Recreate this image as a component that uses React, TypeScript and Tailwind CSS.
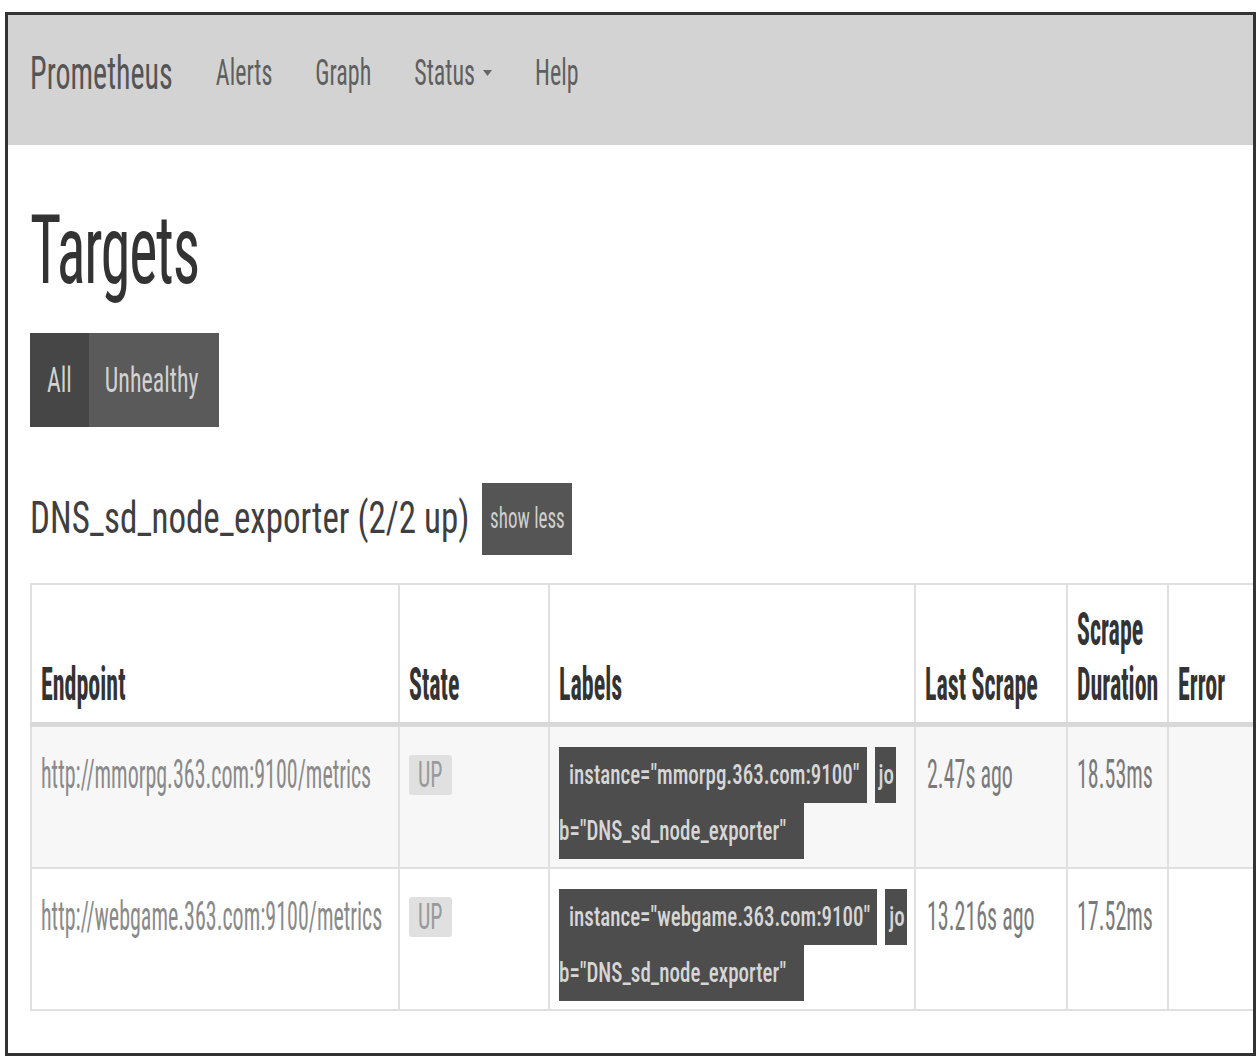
import type { ReactNode } from 'react';

const targets = [
  {
    endpoint: 'http://mmorpg.363.com:9100/metrics',
    instance: 'instance="mmorpg.363.com:9100"',
    lastScrape: '2.47s ago',
    duration: '18.53ms',
    striped: true,
  },
  {
    endpoint: 'http://webgame.363.com:9100/metrics',
    instance: 'instance="webgame.363.com:9100"',
    lastScrape: '13.216s ago',
    duration: '17.52ms',
    striped: false,
  },
];

// the screenshot is stretched vertically, so glyphs get a taller scale
function Tall({ className, children }: { className: string; children: ReactNode }) {
  return <span className={className}>{children}</span>;
}

function Caret() {
  return (
    <svg width="9" height="6" viewBox="0 0 9 6" className="ml-[8px] inline-block">
      <path d="M0 0 L9 0 L4.5 6 Z" fill="#666" />
    </svg>
  );
}

const th = 'align-bottom border-2 border-b-[5px] border-[#e0e0e0] border-b-[#d8d8d8] px-[9px] pt-[18px] pb-[9px]';
const td = 'align-top border-2 border-[#e0e0e0] px-[9px] pt-[20px] pb-[8px]';

export default function App() {
  return (
    <div className="min-h-screen bg-white pt-[12px] pl-[5px] pr-[2px] pb-[6px] [font-family:Roboto,'Liberation_Sans',sans-serif] [font-stretch:condensed]">
      <div className="h-[1044px] border-[3px] border-[#333] overflow-hidden">
        {/* Navbar */}
        <nav className="h-[130px] bg-[#d3d3d3] flex items-center gap-[43px] pl-[22px] pb-[15px] text-[#5f5f5f]">
          <Tall className="inline-block scale-y-[1.55] text-[30px] text-[#555]">Prometheus</Tall>
          <Tall className="inline-block scale-y-[1.55] text-[24px]">Alerts</Tall>
          <Tall className="inline-block scale-y-[1.55] text-[24px]">Graph</Tall>
          <span className="text-[24px] flex items-center">
            <Tall className="inline-block scale-y-[1.55]">Status</Tall>
            <Caret />
          </span>
          <Tall className="inline-block scale-y-[1.55] text-[24px]">Help</Tall>
        </nav>

        <main className="pl-[22px]">
          <h1 className="mt-[76px] text-[60px] leading-[60px] tracking-[-0.02em] text-[#333]">
            <Tall className="inline-block scale-y-[1.6]">Targets</Tall>
          </h1>

          <div className="mt-[52px] flex h-[94px] w-fit text-[24px] text-[#d2d2d2]">
            <span className="bg-[#464646] px-[17px] flex items-center">
              <Tall className="inline-block scale-y-[1.45]">All</Tall>
            </span>
            <span className="bg-[#5a5a5a] pl-[16px] pr-[20px] flex items-center">
              <Tall className="inline-block scale-y-[1.45]">Unhealthy</Tall>
            </span>
          </div>

          <div className="mt-[56px] flex h-[72px] items-center gap-[13px]">
            <h2 className="text-[35px] leading-[42px] text-[#3f3f3f]">
              <Tall className="inline-block scale-y-[1.25]">DNS_sd_node_exporter (2/2 up)</Tall>
            </h2>
            <span className="w-[90px] h-[72px] bg-[#555] text-[#cfcfcf] text-[19px] flex items-center justify-center">
              <Tall className="inline-block scale-y-[1.55]">show less</Tall>
            </span>
          </div>

          {/* Targets table */}
          <table className="mt-[28px] w-full table-fixed border-collapse">
            <colgroup>
              <col className="w-[368px]" />
              <col className="w-[150px]" />
              <col className="w-[366px]" />
              <col className="w-[152px]" />
              <col className="w-[101px]" />
              <col className="w-[86px]" />
            </colgroup>
            <thead>
              <tr className="text-left text-[24px] leading-[55px] font-bold text-[#333]">
                <th className={th}>
                  <Tall className="inline-block scale-y-[1.9]">Endpoint</Tall>
                </th>
                <th className={th}>
                  <Tall className="inline-block scale-y-[1.9]">State</Tall>
                </th>
                <th className={th}>
                  <Tall className="inline-block scale-y-[1.9]">Labels</Tall>
                </th>
                <th className={th}>
                  <Tall className="inline-block scale-y-[1.9]">Last Scrape</Tall>
                </th>
                <th className={th}>
                  <Tall className="block scale-y-[1.9]">Scrape</Tall>
                  <Tall className="block scale-y-[1.9]">Duration</Tall>
                </th>
                <th className={th}>
                  <Tall className="inline-block scale-y-[1.9]">Error</Tall>
                </th>
              </tr>
            </thead>
            <tbody>
              {targets.map((t) => (
                <tr
                  key={t.endpoint}
                  className={t.striped ? 'bg-[#f7f7f7] text-[22px] leading-[56px] text-[#8a8a8a]' : 'bg-white text-[22px] leading-[56px] text-[#8a8a8a]'}
                >
                  <td className={td + ' whitespace-nowrap'}>
                    <Tall className="inline-block scale-y-[1.85]">{t.endpoint}</Tall>
                  </td>
                  <td className={td}>
                    <span className="inline-block rounded-[3px] bg-[#e0e0e0] px-[9px] leading-[40px] text-[#9a9a9a]">
                      <Tall className="inline-block scale-y-[1.65]">UP</Tall>
                    </span>
                  </td>
                  <td className={td + ' text-[21px] font-medium text-[#d6d6d6]'}>
                    <div className="flex h-[56px] gap-[8px]">
                      <span className="bg-[#4d4d4d] pl-[10px] pr-[7px] whitespace-nowrap">
                        <Tall className="inline-block scale-y-[1.35]">{t.instance}</Tall>
                      </span>
                      <span className="bg-[#4d4d4d] pl-[4px] pr-[2px]">
                        <Tall className="inline-block scale-y-[1.35]">jo</Tall>
                      </span>
                    </div>
                    <div className="flex h-[56px]">
                      <span className="bg-[#4d4d4d] pr-[18px] whitespace-nowrap">
                        <Tall className="inline-block scale-y-[1.35]">b="DNS_sd_node_exporter"</Tall>
                      </span>
                    </div>
                  </td>
                  <td className={td + ' pl-[11px] pr-[7px] text-[#7a7a7a] whitespace-nowrap'}>
                    <Tall className="inline-block scale-y-[1.85]">{t.lastScrape}</Tall>
                  </td>
                  <td className={td + ' text-[#7a7a7a]'}>
                    <Tall className="inline-block scale-y-[1.85]">{t.duration}</Tall>
                  </td>
                  <td className={td}></td>
                </tr>
              ))}
            </tbody>
          </table>
        </main>
      </div>
    </div>
  );
}
